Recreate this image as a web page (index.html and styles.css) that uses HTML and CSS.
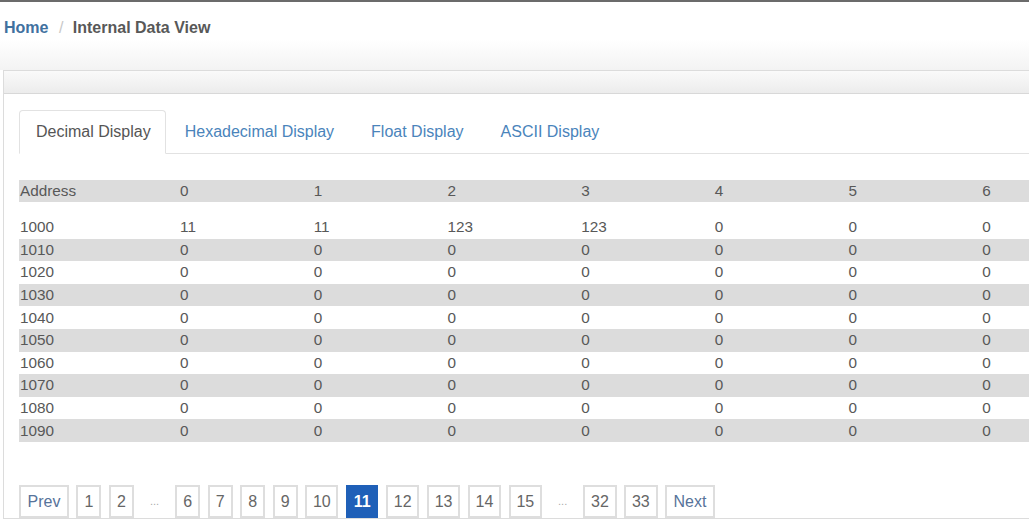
FILE: index.html
```html
<!DOCTYPE html>
<html>
<head>
	<title>Internal Data View</title>
	<meta charset="utf-8">
	<meta name="viewport" content="width=device-width,initial-scale=1">
	<link rel="stylesheet" href="styles.css">
</head>
<body>

	<div class="breadcrumb">
		<a class="crumb_home" href="#">Home</a>
		<span class="crumb_sep">/</span>
		<span class="crumb_current">Internal Data View</span>
	</div>

	<div class="panel">
		<div class="panel_heading"></div>
		<div class="panel_body">

			<ul class="nav_tabs">
				<li class="active"><a href="#">Decimal Display</a></li>
				<li><a href="#">Hexadecimal Display</a></li>
				<li><a href="#">Float Display</a></li>
				<li><a href="#">ASCII Display</a></li>
			</ul>

			<table class="data_table">
				<colgroup>
					<col class="col_address">
					<col><col><col><col><col><col><col>
				</colgroup>
				<thead>
					<tr><th>Address</th><th>0</th><th>1</th><th>2</th><th>3</th><th>4</th><th>5</th><th>6</th></tr>
				</thead>
				<tbody>
					<tr><td>1000</td><td>11</td><td>11</td><td>123</td><td>123</td><td>0</td><td>0</td><td>0</td></tr>
					<tr><td>1010</td><td>0</td><td>0</td><td>0</td><td>0</td><td>0</td><td>0</td><td>0</td></tr>
					<tr><td>1020</td><td>0</td><td>0</td><td>0</td><td>0</td><td>0</td><td>0</td><td>0</td></tr>
					<tr><td>1030</td><td>0</td><td>0</td><td>0</td><td>0</td><td>0</td><td>0</td><td>0</td></tr>
					<tr><td>1040</td><td>0</td><td>0</td><td>0</td><td>0</td><td>0</td><td>0</td><td>0</td></tr>
					<tr><td>1050</td><td>0</td><td>0</td><td>0</td><td>0</td><td>0</td><td>0</td><td>0</td></tr>
					<tr><td>1060</td><td>0</td><td>0</td><td>0</td><td>0</td><td>0</td><td>0</td><td>0</td></tr>
					<tr><td>1070</td><td>0</td><td>0</td><td>0</td><td>0</td><td>0</td><td>0</td><td>0</td></tr>
					<tr><td>1080</td><td>0</td><td>0</td><td>0</td><td>0</td><td>0</td><td>0</td><td>0</td></tr>
					<tr><td>1090</td><td>0</td><td>0</td><td>0</td><td>0</td><td>0</td><td>0</td><td>0</td></tr>
				</tbody>
			</table>

			<div class="pagination">
				<a class="page_btn page_word" href="#">Prev</a>
				<a class="page_btn" href="#">1</a>
				<a class="page_btn" href="#">2</a>
				<span class="page_gap">...</span>
				<a class="page_btn" href="#">6</a>
				<a class="page_btn" href="#">7</a>
				<a class="page_btn" href="#">8</a>
				<a class="page_btn" href="#">9</a>
				<a class="page_btn" href="#">10</a>
				<a class="page_btn current" href="#">11</a>
				<a class="page_btn" href="#">12</a>
				<a class="page_btn" href="#">13</a>
				<a class="page_btn" href="#">14</a>
				<a class="page_btn" href="#">15</a>
				<span class="page_gap">...</span>
				<a class="page_btn" href="#">32</a>
				<a class="page_btn" href="#">33</a>
				<a class="page_btn page_word" href="#">Next</a>
			</div>

		</div>
	</div>

</body>
</html>
```

FILE: styles.css
```css
* {
	margin: 0px;
	padding: 0px;
	box-sizing: border-box;
}
body {
	font-family: "Liberation Sans", Arial, sans-serif;
	color: #555;
	background-color: #fff;
	overflow: hidden;
	border-top: 2px solid #6b6b6b;
}
a {
	text-decoration: none;
}
.breadcrumb {
	height: 68px;
	padding: 17px 4px 0px;
	font-size: 16px;
	font-weight: bold;
	background: linear-gradient(#fff 0%, #fff 55%, #f3f3f3 100%);
}
.crumb_home {
	color: #41719f;
}
.crumb_sep {
	color: #c8c8c8;
	font-weight: normal;
	padding: 0px 5px 0px 6px;
}
.crumb_current {
	color: #585858;
}
.panel {
	margin-left: 3px;
	width: 1100px;
	border: 1px solid #dcdcdc;
	border-right: none;
	background-color: #fff;
}
.panel_heading {
	height: 23px;
	background: linear-gradient(#fafafa, #ececec);
	border-bottom: 1px solid #d8d8d8;
}
.panel_body {
	padding: 16px 15px 0px;
}
.nav_tabs {
	list-style: none;
	display: flex;
	border-bottom: 1px solid #e2e2e2;
	font-size: 16px;
}
.nav_tabs li {
	margin-right: 2px;
	margin-bottom: -1px;
}
.nav_tabs a {
	display: block;
	padding: 10px 17px 11px 16px;
	line-height: 21px;
	color: #4a84bb;
	border: 1px solid transparent;
	border-radius: 4px 4px 0px 0px;
}
.nav_tabs li.active a {
	color: #555;
	background-color: #fff;
	padding-right: 14px;
	border-color: #e2e2e2 #e2e2e2 transparent;
}
.data_table {
	margin-top: 26px;
	table-layout: fixed;
	width: 1096px;
	border-collapse: separate;
	border-spacing: 0px;
	font-size: 15.3px;
	color: #585858;
}
.data_table col {
	width: 133.7px;
}
.data_table col.col_address {
	width: 160px;
}
.data_table th,
.data_table td {
	text-align: left;
	font-weight: normal;
	height: 22.6px;
	padding: 0px 0px 0px 1px;
	white-space: nowrap;
}
.data_table th {
	background-color: #dcdcdc;
	background-clip: padding-box;
	border-bottom: 14px solid #fff;
	height: 36px;
}
.data_table tbody tr:nth-child(even) td {
	background-color: #dcdcdc;
}
.pagination {
	display: flex;
	align-items: center;
	gap: 7.5px;
	margin-top: 43px;
	font-size: 16px;
}
.page_btn {
	display: block;
	height: 33px;
	line-height: 29px;
	padding: 0px 5.8px;
	border: 2px solid #dedede;
	color: #666;
	text-align: center;
	min-width: 25px;
}
.page_word {
	color: #57739a;
	padding: 0px 6.5px;
}
.page_btn.current {
	background-color: #1f60b8;
	border-color: #1f60b8;
	color: #fff;
	font-weight: bold;
}
.page_gap {
	color: #aaa;
	font-size: 11px;
	padding: 0px 8.5px;
}
```
